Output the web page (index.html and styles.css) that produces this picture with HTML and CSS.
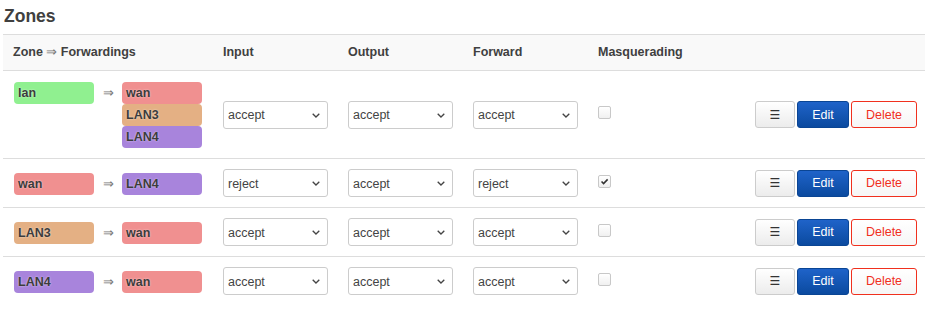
FILE: index.html
```html
<!DOCTYPE html>
<html lang="en">
<head>
    <meta charset="UTF-8">
    <meta name="viewport" content="width=device-width, initial-scale=1.0">
    <title>Firewall - Zones</title>
    <link rel="stylesheet" href="styles.css">
</head>
<body>
    <h2 class="section-title">Zones</h2>
    <table class="zones">
        <thead>
            <tr>
                <th class="col-zone">Zone <span class="arrow">&rArr;</span> Forwardings</th>
                <th class="col-policy">Input</th>
                <th class="col-policy">Output</th>
                <th class="col-policy">Forward</th>
                <th class="col-masq">Masquerading</th>
                <th class="col-actions"></th>
            </tr>
        </thead>
        <tbody>
            <tr>
                <td>
                    <div class="zone-fwd">
                        <span class="badge lan">lan</span>
                        <span class="fwd-arrow">&rArr;</span>
                        <div class="badge-list">
                            <span class="badge wan">wan</span>
                            <span class="badge lan3">LAN3</span>
                            <span class="badge lan4">LAN4</span>
                        </div>
                    </div>
                </td>
                <td><div class="select-wrap"><select><option>accept</option><option>reject</option><option>drop</option></select><svg class="chevron" viewBox="0 0 8 5"><path d="M0.7 0.7 L4 4 L7.3 0.7"/></svg></div></td>
                <td><div class="select-wrap"><select><option>accept</option><option>reject</option><option>drop</option></select><svg class="chevron" viewBox="0 0 8 5"><path d="M0.7 0.7 L4 4 L7.3 0.7"/></svg></div></td>
                <td><div class="select-wrap"><select><option>accept</option><option>reject</option><option>drop</option></select><svg class="chevron" viewBox="0 0 8 5"><path d="M0.7 0.7 L4 4 L7.3 0.7"/></svg></div></td>
                <td><span class="check"></span></td>
                <td>
                    <div class="actions">
                        <button class="btn btn-drag">&#9776;</button>
                        <button class="btn btn-edit">Edit</button>
                        <button class="btn btn-delete">Delete</button>
                    </div>
                </td>
            </tr>
            <tr>
                <td>
                    <div class="zone-fwd">
                        <span class="badge wan">wan</span>
                        <span class="fwd-arrow">&rArr;</span>
                        <div class="badge-list">
                            <span class="badge lan4">LAN4</span>
                        </div>
                    </div>
                </td>
                <td><div class="select-wrap"><select><option>reject</option><option>accept</option><option>drop</option></select><svg class="chevron" viewBox="0 0 8 5"><path d="M0.7 0.7 L4 4 L7.3 0.7"/></svg></div></td>
                <td><div class="select-wrap"><select><option>accept</option><option>reject</option><option>drop</option></select><svg class="chevron" viewBox="0 0 8 5"><path d="M0.7 0.7 L4 4 L7.3 0.7"/></svg></div></td>
                <td><div class="select-wrap"><select><option>reject</option><option>accept</option><option>drop</option></select><svg class="chevron" viewBox="0 0 8 5"><path d="M0.7 0.7 L4 4 L7.3 0.7"/></svg></div></td>
                <td><span class="check checked"><svg viewBox="0 0 13 13"><path d="M3 6.6 L5.4 9 L10.2 4"/></svg></span></td>
                <td>
                    <div class="actions">
                        <button class="btn btn-drag">&#9776;</button>
                        <button class="btn btn-edit">Edit</button>
                        <button class="btn btn-delete">Delete</button>
                    </div>
                </td>
            </tr>
            <tr>
                <td>
                    <div class="zone-fwd">
                        <span class="badge lan3">LAN3</span>
                        <span class="fwd-arrow">&rArr;</span>
                        <div class="badge-list">
                            <span class="badge wan">wan</span>
                        </div>
                    </div>
                </td>
                <td><div class="select-wrap"><select><option>accept</option><option>reject</option><option>drop</option></select><svg class="chevron" viewBox="0 0 8 5"><path d="M0.7 0.7 L4 4 L7.3 0.7"/></svg></div></td>
                <td><div class="select-wrap"><select><option>accept</option><option>reject</option><option>drop</option></select><svg class="chevron" viewBox="0 0 8 5"><path d="M0.7 0.7 L4 4 L7.3 0.7"/></svg></div></td>
                <td><div class="select-wrap"><select><option>accept</option><option>reject</option><option>drop</option></select><svg class="chevron" viewBox="0 0 8 5"><path d="M0.7 0.7 L4 4 L7.3 0.7"/></svg></div></td>
                <td><span class="check"></span></td>
                <td>
                    <div class="actions">
                        <button class="btn btn-drag">&#9776;</button>
                        <button class="btn btn-edit">Edit</button>
                        <button class="btn btn-delete">Delete</button>
                    </div>
                </td>
            </tr>
            <tr>
                <td>
                    <div class="zone-fwd">
                        <span class="badge lan4">LAN4</span>
                        <span class="fwd-arrow">&rArr;</span>
                        <div class="badge-list">
                            <span class="badge wan">wan</span>
                        </div>
                    </div>
                </td>
                <td><div class="select-wrap"><select><option>accept</option><option>reject</option><option>drop</option></select><svg class="chevron" viewBox="0 0 8 5"><path d="M0.7 0.7 L4 4 L7.3 0.7"/></svg></div></td>
                <td><div class="select-wrap"><select><option>accept</option><option>reject</option><option>drop</option></select><svg class="chevron" viewBox="0 0 8 5"><path d="M0.7 0.7 L4 4 L7.3 0.7"/></svg></div></td>
                <td><div class="select-wrap"><select><option>accept</option><option>reject</option><option>drop</option></select><svg class="chevron" viewBox="0 0 8 5"><path d="M0.7 0.7 L4 4 L7.3 0.7"/></svg></div></td>
                <td><span class="check"></span></td>
                <td>
                    <div class="actions">
                        <button class="btn btn-drag">&#9776;</button>
                        <button class="btn btn-edit">Edit</button>
                        <button class="btn btn-delete">Delete</button>
                    </div>
                </td>
            </tr>
        </tbody>
    </table>
</body>
</html>
```

FILE: styles.css
```css
/* Colours used across the zone table */
:root {
    --text-dark: #404040;
    --text-select: #444;
    --border-light: #ddd;
    --border-input: #ccc;
    --header-bg: #f9f9f9;
    --zone-lan: #90f090;
    --zone-wan: #f09090;
    --zone-lan3: #e4b084;
    --zone-lan4: #a884dc;
    --edit-top: #1f63c9;
    --edit-bottom: #0b4a9f;
    --delete-red: #f0301e;
}

* {
    box-sizing: border-box;
}

body {
    margin: 0;
    padding: 6px 0 0 3px;
    font-family: "Liberation Sans", Arial, sans-serif;
    font-size: 12.5px;
    color: var(--text-dark);
    background: #fff;
}

.section-title {
    margin: 0 0 7px 1px;
    font-size: 17.5px;
    line-height: 21px;
    font-weight: 700;
}

/* Table */
.zones {
    width: 922px;
    border-collapse: collapse;
    table-layout: fixed;
}

.zones th {
    background: var(--header-bg);
    border-top: 1px solid var(--border-light);
    border-bottom: 1px solid var(--border-light);
    padding: 9px 10px;
    line-height: 17px;
    text-align: left;
    font-weight: 700;
}

.zones th .arrow {
    font-weight: 400;
    color: #777;
}

.col-zone { width: 210px; }
.col-policy { width: 125px; }
.col-masq { width: 150px; }

.zones td {
    padding: 10px;
    vertical-align: middle;
    border-bottom: 1px solid var(--border-light);
}

.zones tbody tr:last-child td {
    border-bottom: none;
}

/* Zone -> forwardings */
.zone-fwd {
    display: flex;
    align-items: flex-start;
    padding: 1px 0 0 1px;
}

.badge {
    display: block;
    width: 80px;
    height: 22px;
    line-height: 22px;
    padding: 0 4px;
    border-radius: 4px;
    font-weight: 700;
    color: #3c3c3c;
    text-shadow: 0 0 2px rgba(255, 255, 255, 0.7);
}

.badge.lan { background: var(--zone-lan); }
.badge.wan { background: var(--zone-wan); }
.badge.lan3 { background: var(--zone-lan3); }
.badge.lan4 { background: var(--zone-lan4); }

.fwd-arrow {
    width: 28px;
    line-height: 22px;
    text-align: center;
    color: #777;
}

.badge-list {
    display: flex;
    flex-direction: column;
}

/* Policy selects */
.select-wrap {
    position: relative;
    width: 105px;
}

.select-wrap select {
    display: block;
    width: 100%;
    height: 28px;
    padding: 1px 20px 0 4px;
    border: 1px solid var(--border-input);
    border-radius: 3px;
    background: #fff;
    font-family: inherit;
    font-size: 12.5px;
    color: var(--text-select);
    -webkit-appearance: none;
    appearance: none;
}

.chevron {
    position: absolute;
    right: 8px;
    top: 12px;
    width: 8px;
    height: 5px;
    pointer-events: none;
}

.chevron path {
    fill: none;
    stroke: #444;
    stroke-width: 1.3;
}

/* Masquerading checkbox */
.check {
    display: block;
    width: 13px;
    height: 13px;
    margin-top: -4px;
    border: 1px solid #c8c8c8;
    border-radius: 2px;
    background: linear-gradient(#fff, #f0f0f0);
}

.check svg {
    display: block;
    width: 11px;
    height: 11px;
}

.check svg path {
    fill: none;
    stroke: #333;
    stroke-width: 1.8;
}

/* Row buttons */
.actions {
    display: flex;
    justify-content: flex-end;
    gap: 2px;
    margin-right: -2px;
}

.btn {
    height: 27px;
    padding: 0;
    border-radius: 3px;
    font-family: inherit;
    font-size: 12.5px;
    cursor: pointer;
}

.btn-drag {
    width: 40px;
    border: 1px solid #ccc;
    background: linear-gradient(#fff, #ececec);
    color: #333;
    font-family: "DejaVu Sans", sans-serif;
    font-size: 12px;
}

.btn-edit {
    width: 52px;
    border: 1px solid #0a4594;
    background: linear-gradient(var(--edit-top), var(--edit-bottom));
    color: #fff;
}

.btn-delete {
    width: 66px;
    border: 1px solid var(--delete-red);
    background: linear-gradient(#fff, #f6f6f6);
    color: var(--delete-red);
}
```
